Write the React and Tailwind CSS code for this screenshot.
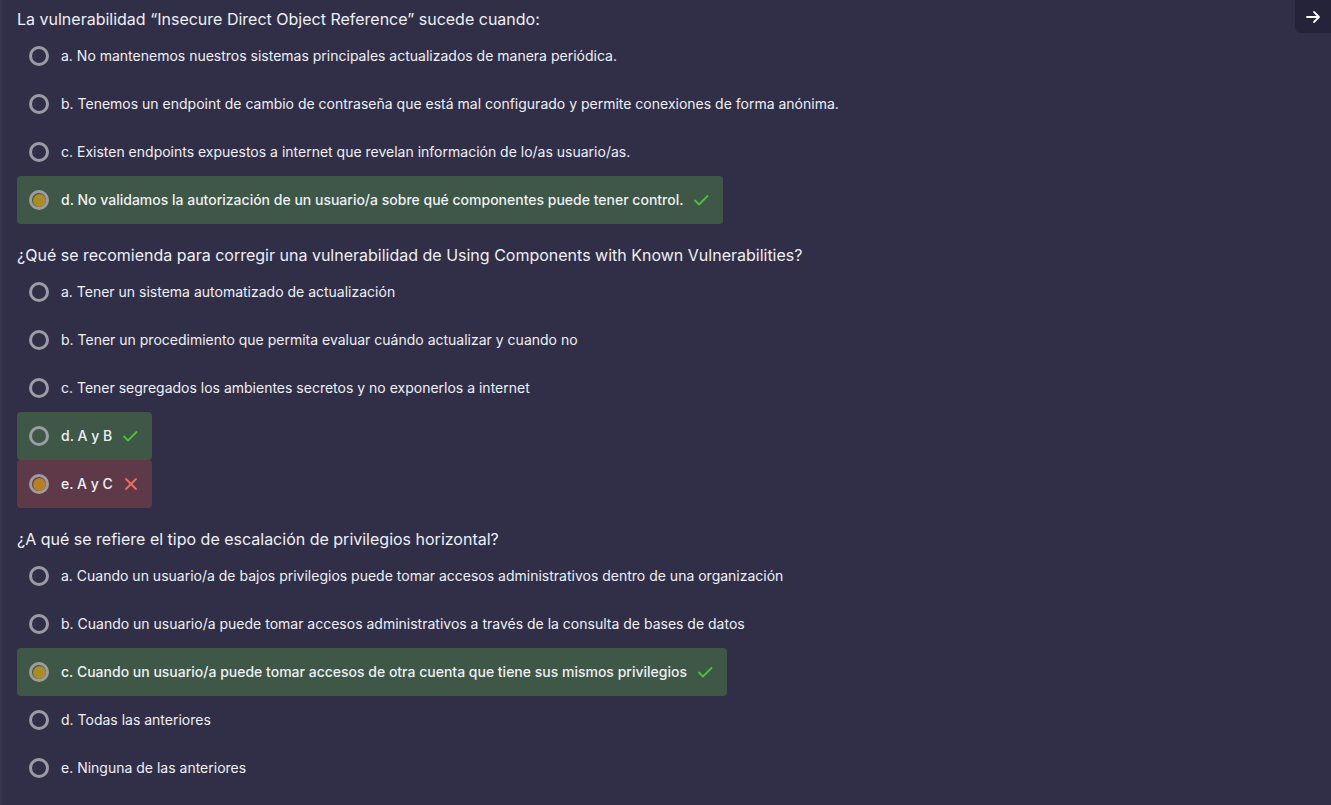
import React from "react";

const questions = [
  {
    title: "La vulnerabilidad “Insecure Direct Object Reference” sucede cuando:",
    options: [
      { text: "a. No mantenemos nuestros sistemas principales actualizados de manera periódica." },
      { text: "b. Tenemos un endpoint de cambio de contraseña que está mal configurado y permite conexiones de forma anónima." },
      { text: "c. Existen endpoints expuestos a internet que revelan información de lo/as usuario/as." },
      { text: "d. No validamos la autorización de un usuario/a sobre qué componentes puede tener control.", state: "correct", selected: true },
    ],
  },
  {
    title: "¿Qué se recomienda para corregir una vulnerabilidad de Using Components with Known Vulnerabilities?",
    options: [
      { text: "a. Tener un sistema automatizado de actualización" },
      { text: "b. Tener un procedimiento que permita evaluar cuándo actualizar y cuando no" },
      { text: "c. Tener segregados los ambientes secretos y no exponerlos a internet" },
      { text: "d. A y B", state: "correct" },
      { text: "e. A y C", state: "wrong", selected: true },
    ],
  },
  {
    title: "¿A qué se refiere el tipo de escalación de privilegios horizontal?",
    options: [
      { text: "a. Cuando un usuario/a de bajos privilegios puede tomar accesos administrativos dentro de una organización" },
      { text: "b. Cuando un usuario/a puede tomar accesos administrativos a través de la consulta de bases de datos" },
      { text: "c. Cuando un usuario/a puede tomar accesos de otra cuenta que tiene sus mismos privilegios", state: "correct", selected: true },
      { text: "d. Todas las anteriores" },
      { text: "e. Ninguna de las anteriores" },
    ],
  },
];

const Radio = ({ selected, state }) => (
  <span className="flex h-5 w-5 shrink-0 items-center justify-center rounded-full border-[3px] border-[#9c9ca4]">
    {selected && (
      <span
        className={`h-[13px] w-[13px] rounded-full ${
          state === "wrong" ? "bg-[#b87f26]" : "bg-[#ab8d26]"
        }`}
      />
    )}
  </span>
);

const Check = () => (
  <svg width="16" height="16" viewBox="0 0 16 16" fill="none" className="ml-[10px]">
    <path d="M2 8.5l4 4L14.5 4" stroke="#4cc03c" strokeWidth="1.8" strokeLinecap="round" strokeLinejoin="round" />
  </svg>
);

const Cross = () => (
  <svg width="14" height="14" viewBox="0 0 14 14" fill="none" className="ml-[11px]">
    <path d="M2 2l10 10M12 2L2 12" stroke="#f2705e" strokeWidth="1.8" strokeLinecap="round" />
  </svg>
);

const Option = ({ text, state, selected }) => {
  const box =
    state === "correct"
      ? "bg-[#3e5746] rounded pr-[14px] font-medium"
      : state === "wrong"
      ? "bg-[#5e3a48] rounded pr-[14px] font-medium"
      : "font-normal";
  return (
    <div className="flex h-12">
      <div className={`inline-flex items-center pl-3 ${box}`}>
        <Radio selected={selected} state={state} />
        <span className="ml-3 -mt-px text-[14px] text-[#eef0f6]">{text}</span>
        {state === "correct" && <Check />}
        {state === "wrong" && <Cross />}
      </div>
    </div>
  );
};

export default function App() {
  return (
    <div
      className="relative min-h-[805px] bg-[#312f48] border-l-2 border-[#38364f] pl-[15px]"
      style={{ fontFamily: "Inter, 'Noto Sans', sans-serif" }}
    >
      <button className="absolute right-0 top-0 flex h-[33px] w-9 items-center justify-center rounded-bl-md bg-[#25233a] text-white">
        <svg width="16" height="16" viewBox="0 0 16 16" fill="none">
          <path d="M2 8h12M9 3l5 5-5 5" stroke="white" strokeWidth="1.8" strokeLinecap="round" strokeLinejoin="round" />
        </svg>
      </button>
      {questions.map((q, i) => (
        <div key={i} className={i > 0 ? "mt-3" : ""}>
          <div className="h-8 pt-[7px] text-[16px] leading-6 text-[#eef0f6]">{q.title}</div>
          {q.options.map((o, j) => (
            <Option key={j} {...o} />
          ))}
        </div>
      ))}
    </div>
  );
}
